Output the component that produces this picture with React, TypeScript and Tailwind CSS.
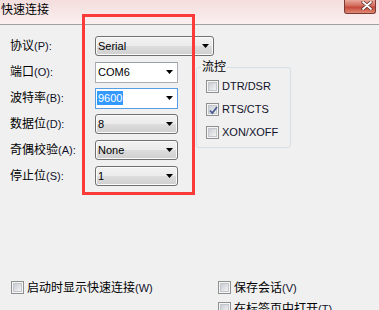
import React from 'react';

const font = "font-['Liberation_Sans','Noto_Sans_CJK_SC',sans-serif]";

function Arrow() {
  return (
    <svg width="7" height="4" viewBox="0 0 7 4" className="shrink-0">
      <path d="M0 0H7L3.5 4Z" fill="#000" />
    </svg>
  );
}

function Combo({
  value,
  wide,
  kind = 'list',
}: {
  value: string;
  wide?: boolean;
  kind?: 'list' | 'edit' | 'focus';
}) {
  const width = wide ? 'w-[119px]' : 'w-[83px]';
  if (kind === 'list') {
    return (
      <div
        className={`${width} flex h-[20px] items-center justify-between rounded-[3px] border border-[#707070] bg-[linear-gradient(to_bottom,#f2f2f2_0%,#ebebeb_50%,#dddddd_50%,#cfcfcf_100%)] pl-[2px] pr-[4px] shadow-[inset_0_0_0_1px_#fbfbfb]`}
      >
        <span className="text-[11px] leading-[14px] text-black">{value}</span>
        <Arrow />
      </div>
    );
  }
  const border = kind === 'focus' ? 'border-[#569de5]' : 'border-[#abadb3] border-t-[#9a9ea6]';
  return (
    <div
      className={`${width} flex h-[21px] items-center justify-between border ${border} bg-white pl-[1px] pr-[4px]`}
    >
      {kind === 'focus' ? (
        <span className="bg-[#3399ff] px-[1px] text-[11px] leading-[14px] text-white">{value}</span>
      ) : (
        <span className="pl-[1px] text-[11px] leading-[14px] text-black">{value}</span>
      )}
      <Arrow />
    </div>
  );
}

function CheckBox({checked}: {checked?: boolean}) {
  return (
    <span className="relative flex h-[13px] w-[13px] shrink-0 items-center justify-center border border-[#8f8f8f] bg-[#f6f6f6]">
      <span className="h-[9px] w-[9px] border border-[#c3c6cb] bg-gradient-to-br from-[#c9cdd3] to-[#f3f3f3]" />
      {checked && (
        <svg width="11" height="11" viewBox="0 0 11 11" className="absolute left-[1px] top-[1px]">
          <path d="M2 5.5L4.3 8L9 2" fill="none" stroke="#4a5c93" strokeWidth="1.8" />
        </svg>
      )}
    </span>
  );
}

function CheckRow({label, checked}: {label: React.ReactNode; checked?: boolean}) {
  return (
    <div className="flex items-center gap-[3px]">
      <CheckBox checked={checked} />
      <span className="text-[11px] leading-[14px] text-[#10102a]">{label}</span>
    </div>
  );
}

function Label({zh, key_}: {zh: string; key_: string}) {
  return (
    <span className="w-[85px] shrink-0 text-[11px] leading-[16px] text-[#10102a]">
      <span className="text-[12px] text-black">{zh}</span>({key_}):
    </span>
  );
}

function CloseButton() {
  return (
    <div className="mr-[3px] flex h-[14px] w-[32px] items-start justify-end rounded-b-[3px] border border-t-0 border-[#7a3a33] bg-[linear-gradient(to_bottom,#e9a99c_0%,#d2695b_45%,#c5473a_55%,#e08a74_100%)] pr-[2px] pt-[1px]">
      <svg width="12" height="9" viewBox="0 0 12 9">
        <path d="M2 1L10 8M10 1L2 8" stroke="#5b2a24" strokeWidth="3.2" strokeLinecap="round" />
        <path d="M2 1L10 8M10 1L2 8" stroke="#fff" strokeWidth="1.8" strokeLinecap="round" />
      </svg>
    </div>
  );
}

export default function App() {
  const rows: {zh: string; k: string; value: string; kind: 'list' | 'edit' | 'focus'}[] = [
    {zh: '端口', k: 'O', value: 'COM6', kind: 'edit'},
    {zh: '波特率', k: 'B', value: '9600', kind: 'focus'},
    {zh: '数据位', k: 'D', value: '8', kind: 'list'},
    {zh: '奇偶校验', k: 'A', value: 'None', kind: 'list'},
    {zh: '停止位', k: 'S', value: '1', kind: 'list'},
  ];

  return (
    <div className={`${font} relative h-[310px] w-[379px] overflow-hidden bg-[#f0f0f0]`}>
      {/* title bar */}
      <div className="flex h-[25px] items-start justify-between border-b border-[#a0a0a0] bg-gradient-to-b from-[#f4dddd] to-[#fbf0f0]">
        <span className="pl-[1px] pt-[3px] text-[12px] leading-[14px] text-black">快速连接</span>
        <CloseButton />
      </div>

      <div className="px-[10px] pt-[8px]">
        <div className="flex h-[26px] items-center">
          <Label zh="协议" key_="P" />
          <Combo value="Serial" wide />
        </div>

        <div className="flex items-start">
          <div className="flex flex-col">
            {rows.map((r) => (
              <div key={r.k} className="flex h-[26px] items-center">
                <Label zh={r.zh} key_={r.k} />
                <Combo value={r.value} kind={r.kind} />
              </div>
            ))}
          </div>

          <fieldset className="ml-[18px] mt-[1px] w-[95px] rounded-[3px] border border-[#d5dfe5] pb-[8px] pl-[9px] pt-[5px]">
            <legend className="ml-[-5px] px-[1px] text-[12px] leading-[14px] text-black">流控</legend>
            <div className="flex flex-col gap-[9px]">
              <CheckRow label="DTR/DSR" />
              <CheckRow label="RTS/CTS" checked />
              <CheckRow label="XON/XOFF" />
            </div>
          </fieldset>
        </div>

        <div className="mt-[88px] flex pl-[1px]">
          <div className="flex w-[207px] flex-col">
            <div className="flex h-[21px] items-center">
              <CheckRow
                label={
                  <>
                    <span className="text-[12px] text-black">启动时显示快速连接</span>(W)
                  </>
                }
              />
            </div>
          </div>
          <div className="flex flex-col">
            <div className="flex h-[21px] items-center">
              <CheckRow
                label={
                  <>
                    <span className="text-[12px] text-black">保存会话</span>(V)
                  </>
                }
              />
            </div>
            <div className="flex h-[21px] items-center">
              <CheckRow
                label={
                  <>
                    <span className="text-[12px] text-black">在标签页中打开</span>(T)
                  </>
                }
              />
            </div>
          </div>
        </div>
      </div>

      {/* red annotation box */}
      <div className="absolute left-[82px] top-[14px] h-[181px] w-[113px] border-[3px] border-[#fb3a3a]" />
    </div>
  );
}
